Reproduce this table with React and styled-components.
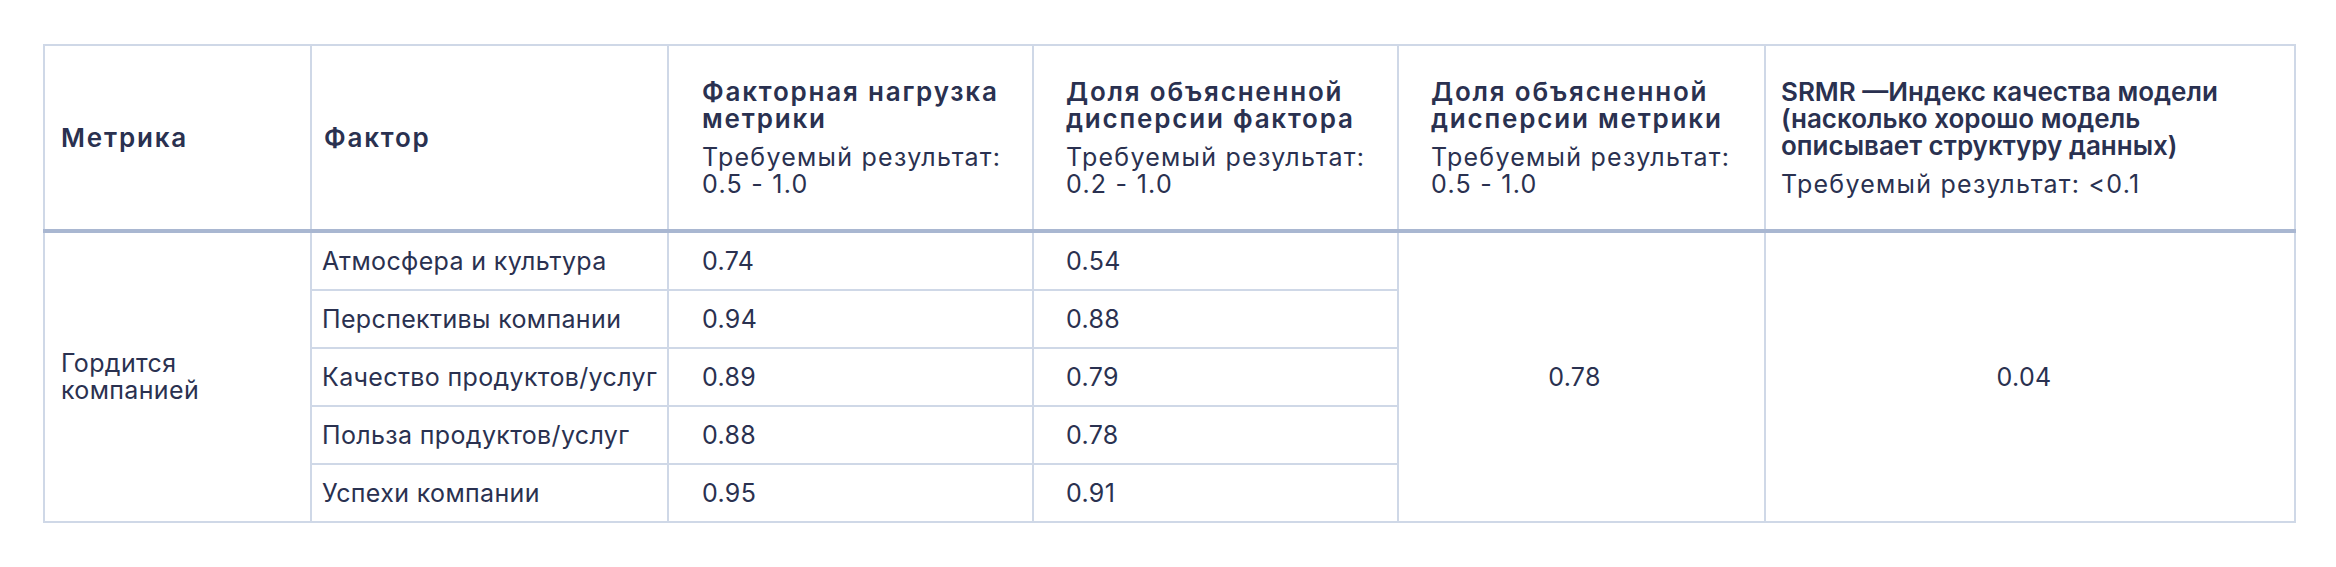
import React from "react";
import styled, { createGlobalStyle } from "styled-components";

const Global = createGlobalStyle`
  html, body { margin: 0; padding: 0; background: #ffffff; }
  body { font-family: Inter, "Noto Sans", sans-serif; color: #2a3150; }
`;

const Page = styled.div`
  padding: 44px 42px 44px 43px;
`;

const Table = styled.table`
  width: 2251px;
  table-layout: fixed;
  border-collapse: collapse;
  border: 2px solid #cfd8e7;
`;

const HeadCell = styled.th`
  height: 183px;
  padding: 0 12px 0 ${(p) => p.$pl}px;
  text-align: left;
  vertical-align: middle;
  border: 2px solid #cfd8e7;
  border-bottom: 4px solid #a9b7d1;
  font-weight: 600;
`;

const Title = styled.div`
  font-size: 26px;
  line-height: 27px;
  font-weight: 600;
  letter-spacing: ${(p) => (p.$tight ? 0 : 1.8)}px;
  white-space: nowrap;
`;

const Sub = styled.div`
  margin-top: 12px;
  font-size: 25px;
  line-height: 27px;
  font-weight: 400;
  letter-spacing: 1.25px;
  white-space: nowrap;
`;

const Cell = styled.td`
  height: 56px;
  padding: 0 ${(p) => (p.$center ? 14 : 8)}px 0 ${(p) => p.$pl}px;
  text-align: ${(p) => (p.$center ? "center" : "left")};
  vertical-align: middle;
  border: 2px solid #cfd8e7;
  font-size: 25px;
  line-height: 27px;
  font-weight: 400;
  letter-spacing: 0.35px;
  white-space: nowrap;
`;

const cols = [267, 357, 365, 365, 367, 530];

const rows = [
  ["Атмосфера и культура", "0.74", "0.54"],
  ["Перспективы компании", "0.94", "0.88"],
  ["Качество продуктов/услуг", "0.89", "0.79"],
  ["Польза продуктов/услуг", "0.88", "0.78"],
  ["Успехи компании", "0.95", "0.91"],
];

export default function App() {
  return (
    <Page>
      <Global />
      <Table>
        <colgroup>
          {cols.map((w, i) => (
            <col key={i} style={{ width: w }} />
          ))}
        </colgroup>
        <thead>
          <tr>
            <HeadCell $pl={16}>
              <Title>Метрика</Title>
            </HeadCell>
            <HeadCell $pl={12}>
              <Title>Фактор</Title>
            </HeadCell>
            <HeadCell $pl={33}>
              <Title>
                Факторная нагрузка
                <br />
                метрики
              </Title>
              <Sub>
                Требуемый результат:
                <br />
                0.5 - 1.0
              </Sub>
            </HeadCell>
            <HeadCell $pl={32}>
              <Title>
                Доля объясненной
                <br />
                дисперсии фактора
              </Title>
              <Sub>
                Требуемый результат:
                <br />
                0.2 - 1.0
              </Sub>
            </HeadCell>
            <HeadCell $pl={32}>
              <Title>
                Доля объясненной
                <br />
                дисперсии метрики
              </Title>
              <Sub>
                Требуемый результат:
                <br />
                0.5 - 1.0
              </Sub>
            </HeadCell>
            <HeadCell $pl={15}>
              <Title $tight>
                SRMR —Индекс качества модели
                <br />
                (насколько хорошо модель
                <br />
                описывает структуру данных)
              </Title>
              <Sub>Требуемый результат: &lt;0.1</Sub>
            </HeadCell>
          </tr>
        </thead>
        <tbody>
          {rows.map((r, i) => (
            <tr key={i}>
              {i === 0 && (
                <Cell rowSpan={5} $pl={16}>
                  Гордится
                  <br />
                  компанией
                </Cell>
              )}
              <Cell $pl={10}>{r[0]}</Cell>
              <Cell $pl={33}>{r[1]}</Cell>
              <Cell $pl={32}>{r[2]}</Cell>
              {i === 0 && (
                <Cell rowSpan={5} $center $pl={0}>
                  0.78
                </Cell>
              )}
              {i === 0 && (
                <Cell rowSpan={5} $center $pl={2}>
                  0.04
                </Cell>
              )}
            </tr>
          ))}
        </tbody>
      </Table>
    </Page>
  );
}
